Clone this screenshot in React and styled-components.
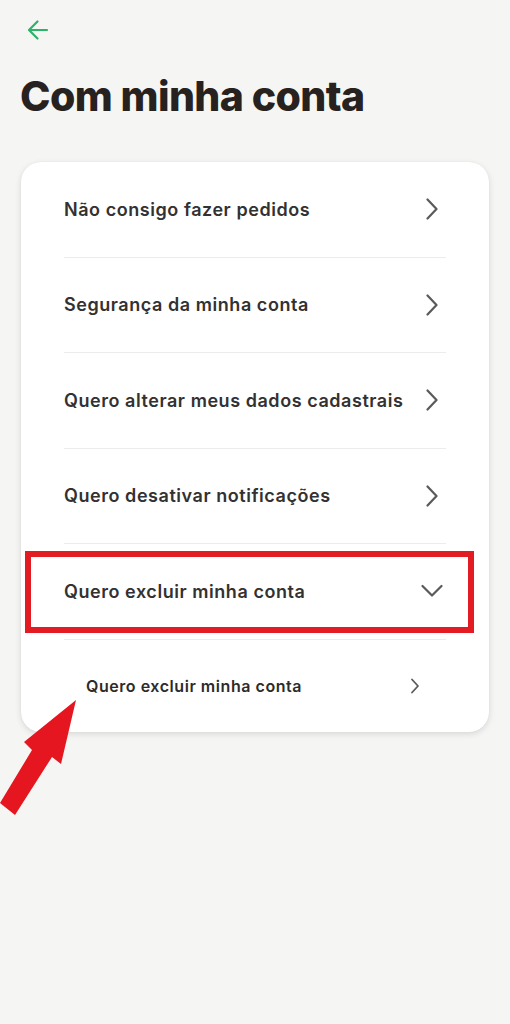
import React from "react";
import styled, { createGlobalStyle } from "styled-components";

const Global = createGlobalStyle`
  html, body { margin: 0; padding: 0; background: #f5f5f3; }
  body { font-family: "Inter", "Noto Sans", sans-serif; -webkit-font-smoothing: antialiased; }
`;

const Page = styled.div`
  position: relative;
  width: 510px;
  min-height: 1024px;
  background: #f5f5f3;
  display: flex;
  flex-direction: column;
`;

const BackButton = styled.button`
  margin: 17px 0 0 25px;
  width: 26px;
  height: 26px;
  padding: 0;
  border: none;
  background: transparent;
  display: flex;
  align-items: center;
  justify-content: center;
  color: #2bb36a;
`;

const Title = styled.h1`
  margin: 29px 0 0 20px;
  font-family: "Inter", sans-serif;
  font-weight: 800;
  font-size: 41px;
  line-height: 49px;
  letter-spacing: -0.6px;
  color: #272120;
`;

const Card = styled.div`
  margin: 41px 21px 0 21px;
  background: #ffffff;
  border-radius: 20px;
  box-shadow: 0 2px 6px rgba(0, 0, 0, 0.12), 0 0 1px rgba(0, 0, 0, 0.08);
  display: flex;
  flex-direction: column;
`;

const Row = styled.div`
  position: relative;
  margin: 0 43px;
  height: 94.5px;
  border-bottom: 1px solid #ececec;
  display: flex;
  align-items: center;
  justify-content: space-between;
`;

const RowLabel = styled.span`
  font-family: "Inter", sans-serif;
  font-weight: 600;
  font-size: 18px;
  letter-spacing: 0.55px;
  color: #333131;
  white-space: nowrap;
`;

const IconBox = styled.span`
  width: 24px;
  height: 24px;
  display: flex;
  align-items: center;
  justify-content: center;
  margin-right: 2px;
  color: #5a5a5a;
  flex-shrink: 0;
`;

const SubRow = styled.div`
  margin: 0 43px;
  height: 92px;
  padding: 0 23px 0 22px;
  display: flex;
  align-items: center;
  justify-content: space-between;
`;

const SubLabel = styled.span`
  font-family: "Inter", sans-serif;
  font-weight: 600;
  font-size: 16px;
  letter-spacing: 0.55px;
  color: #2d2b2b;
  white-space: nowrap;
`;

const SubIcon = styled.span`
  width: 16px;
  height: 16px;
  display: flex;
  align-items: center;
  justify-content: center;
  color: #5a5a5a;
`;

const Highlight = styled.div`
  position: absolute;
  left: -39px;
  right: -28px;
  top: 7px;
  bottom: 6px;
  border: 6px solid #e31b23;
  pointer-events: none;
`;

const PointerArrow = styled.svg`
  position: absolute;
  left: 0;
  top: 698px;
  pointer-events: none;
`;

const ChevronRight = () => (
  <svg width="14" height="22" viewBox="0 0 14 22" fill="none">
    <path d="M2.5 1.5 L11.5 11 L2.5 20.5" stroke="currentColor" strokeWidth="2.2" strokeLinecap="round" strokeLinejoin="round" />
  </svg>
);

const ChevronDown = () => (
  <svg width="22" height="14" viewBox="0 0 22 14" fill="none">
    <path d="M1.5 2 L11 11.5 L20.5 2" stroke="currentColor" strokeWidth="2.2" strokeLinecap="round" strokeLinejoin="round" />
  </svg>
);

const SmallChevron = () => (
  <svg width="10" height="16" viewBox="0 0 10 16" fill="none">
    <path d="M2 1.5 L8 8 L2 14.5" stroke="currentColor" strokeWidth="1.8" strokeLinecap="round" strokeLinejoin="round" />
  </svg>
);

const items = [
  "Não consigo fazer pedidos",
  "Segurança da minha conta",
  "Quero alterar meus dados cadastrais",
  "Quero desativar notificações",
];

export default function App() {
  return (
    <Page>
      <Global />
      <BackButton aria-label="Voltar">
        <svg width="24" height="24" viewBox="0 0 24 24" fill="none">
          <path d="M21 12 H3.5 M11.5 3.5 L3 12 L11.5 20.5" stroke="currentColor" strokeWidth="2.2" strokeLinecap="round" strokeLinejoin="round" />
        </svg>
      </BackButton>
      <Title>Com minha conta</Title>
      <Card>
        {items.map((t) => (
          <Row key={t}>
            <RowLabel>{t}</RowLabel>
            <IconBox><ChevronRight /></IconBox>
          </Row>
        ))}
        <Row>
          <RowLabel>Quero excluir minha conta</RowLabel>
          <IconBox><ChevronDown /></IconBox>
          <Highlight />
        </Row>
        <SubRow>
          <SubLabel>Quero excluir minha conta</SubLabel>
          <SubIcon><SmallChevron /></SubIcon>
        </SubRow>
      </Card>
      <PointerArrow width="80" height="120" viewBox="0 0 80 120">
        <polygon points="76,2 61,66 52,59 15,117 0,105 32,52 24,44" fill="#e5161f" />
      </PointerArrow>
    </Page>
  );
}
